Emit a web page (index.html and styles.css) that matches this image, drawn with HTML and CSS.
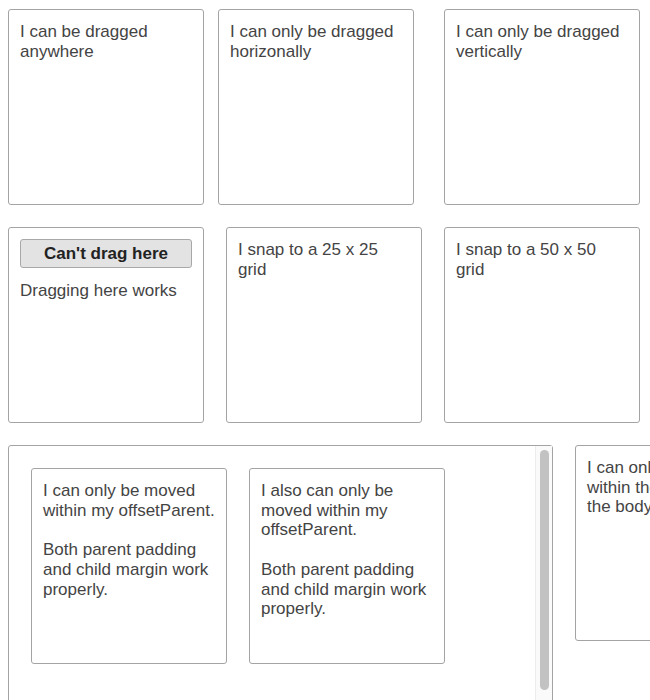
FILE: index.html
```html
<!DOCTYPE html>
<html>
<head>
<meta charset="utf-8">
<link rel="stylesheet" href="styles.css">
</head>
<body>
<div class="page">
  <div class="row">
    <div class="box"><p>I can be dragged<br>anywhere</p></div>
    <div class="box shift-x"><p>I can only be dragged<br>horizonally</p></div>
    <div class="box"><p>I can only be dragged<br>vertically</p></div>
  </div>
  <div class="row">
    <div class="box">
      <button class="no-drag">Can't drag here</button>
      <p>Dragging here works</p>
    </div>
    <div class="box"><p>I snap to a 25 x 25<br>grid</p></div>
    <div class="box"><p>I snap to a 50 x 50<br>grid</p></div>
  </div>
  <div class="row">
    <div class="parent">
      <div class="box">
        <p>I can only be moved<br>within my offsetParent.</p>
        <p>Both parent padding<br>and child margin work<br>properly.</p>
      </div>
      <div class="box">
        <p>I also can only be<br>moved within my<br>offsetParent.</p>
        <p>Both parent padding<br>and child margin work<br>properly.</p>
      </div>
      <div class="scrollbar"><div class="thumb"></div></div>
    </div>
    <div class="box"><p>I can only be moved<br>within the confines of<br>the body element.</p></div>
  </div>
</div>
</body>
</html>
```
FILE: styles.css
```css
html, body {
  overflow: hidden;
}
body {
  margin: 0;
  background: #fff;
  font-family: "Liberation Sans", Arial, Helvetica, sans-serif;
  color: #444;
}
.page {
  padding: 9px 0 0 8px;
  display: flex;
  flex-direction: column;
  gap: 22px;
}
.row {
  display: flex;
  gap: 22px;
  align-items: flex-start;
}
.box {
  flex: 0 0 auto;
  box-sizing: border-box;
  width: 196px;
  height: 196px;
  border: 1px solid #a4a4a4;
  border-radius: 3px;
  background: #fff;
  padding: 12px 11px 11px;
  font-size: 17px;
  line-height: 19.7px;
}
.box p {
  margin: 0 0 19.7px;
  white-space: nowrap;
}
.shift-x {
  transform: translateX(-8px);
}
.no-drag {
  display: block;
  box-sizing: border-box;
  width: 172px;
  height: 29px;
  margin: -1px 0 13px;
  padding: 1px 0 0;
  border: 1px solid #a8a8a8;
  border-radius: 3px;
  background: #e3e3e3;
  font-family: "Liberation Sans", Arial, Helvetica, sans-serif;
  font-size: 17px;
  font-weight: bold;
  color: #222;
}
.parent {
  position: relative;
  flex: 0 0 auto;
  box-sizing: border-box;
  width: 545px;
  height: 300px;
  border: 1px solid #a4a4a4;
  border-radius: 3px;
  padding: 22px;
  display: flex;
  gap: 22px;
  align-items: flex-start;
}
.scrollbar {
  position: absolute;
  top: 0;
  right: 0;
  bottom: 0;
  width: 16px;
  border-left: 1px solid #ececec;
  background: #fafafa;
}
.thumb {
  position: absolute;
  top: 4px;
  left: 4px;
  width: 9px;
  height: 240px;
  border-radius: 5px;
  background: #c2c2c2;
}
```
